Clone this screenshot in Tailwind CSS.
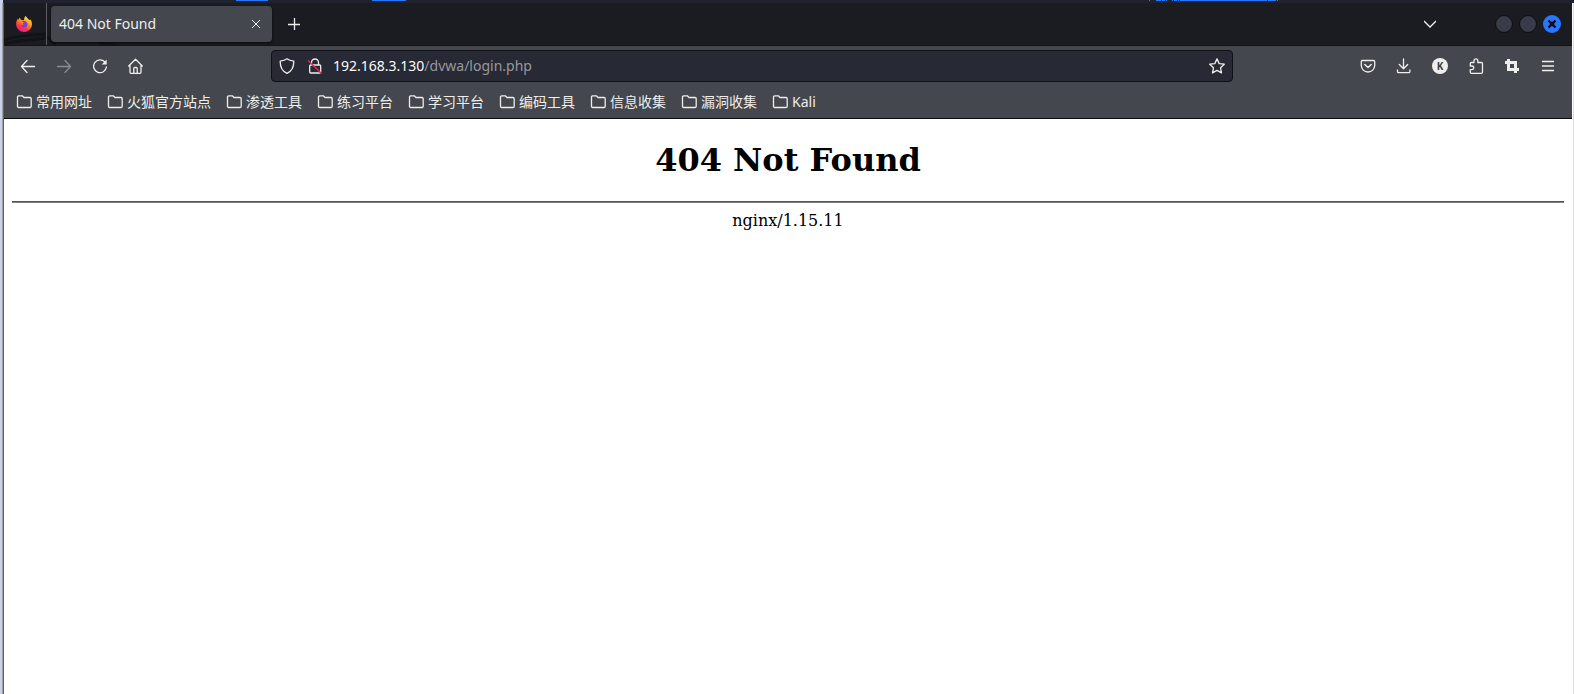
<!DOCTYPE html>
<html lang="zh-CN">
<head>
  <meta charset="UTF-8" />
  <meta name="viewport" content="width=device-width, initial-scale=1.0" />
  <title>404 Not Found</title>
  <script src="https://cdn.jsdelivr.net/npm/@tailwindcss/browser@4"></script>
</head>
<body class="min-h-screen flex flex-col bg-white font-['Noto_Sans','Noto_Sans_CJK_SC',sans-serif] text-sm text-[#eeeeec]">

  <!-- Desktop panel edge -->
  <div class="h-[3px] bg-[#20222e] border-l-[3px] border-[#c9d3ee] flex justify-between items-start">
    <div class="flex pl-[233px] gap-[104px]">
      <span class="w-8 h-px bg-[#2777ff]"></span>
      <span class="w-[34px] h-px bg-[#2777ff]"></span>
    </div>
    <div class="flex gap-px pr-[296px]">
      <span class="w-px h-px bg-[#2777ff]"></span>
      <span class="w-1"></span>
      <span class="w-[5px] h-px bg-[#2777ff]"></span>
      <span class="w-[3px] h-px bg-[#2777ff]"></span>
      <span class="w-px h-px bg-[#2777ff]"></span>
      <span class="w-[3px]"></span>
      <span class="w-px h-px bg-[#2777ff]"></span>
      <span class="w-[3px] h-px bg-[#2777ff]"></span>
      <span class="w-px h-px bg-[#2777ff]"></span>
      <span class="w-[87px] h-px bg-[#2777ff]"></span>
      <span class="w-2 h-px bg-[#2777ff]"></span>
      <span class="w-px h-px bg-[#2777ff]"></span>
    </div>
  </div>

  <div class="grow flex border-l-2 border-r border-l-[#c9d3ee] border-r-[#dddddd]">
    <div class="w-px bg-[#a0a0a0]"></div>
    <div class="w-px bg-[#606060]"></div>

    <!-- Browser window -->
    <div class="grow min-w-0 flex flex-col mr-px">
      <!-- Tab strip -->
      <header class="relative h-[43px] bg-[#1b1c21] border-b border-[#121317] flex items-center overflow-hidden">
        <svg class="absolute left-0 top-6 w-40 h-[18px]" viewBox="0 0 160 18" fill="none" stroke="#121317" stroke-width="3" aria-hidden="true"><path d="M0 13C15 8 28 8 42 7M0 17C16 12 32 14 44 10M44 10l8 9M95 16l35 5" /></svg>
        <button aria-label="Firefox View" class="relative w-[43px] h-full border-r border-[#5a5b60] flex items-center pl-3">
          <svg class="w-4 h-4" viewBox="0 0 16 16">
            <defs>
              <linearGradient id="flame" x1="0.8" y1="0" x2="0.25" y2="1">
                <stop offset="0" stop-color="#fff44f" />
                <stop offset="0.4" stop-color="#ff980e" />
                <stop offset="0.7" stop-color="#ff3647" />
                <stop offset="1" stop-color="#e31587" />
              </linearGradient>
            </defs>
            <path d="M9.6 0C10 1 12 2.2 13.2 4.2L14.4 3.6C15.6 5.4 16 7 16 8.4A7.9 7.6 0 0 1 .1 8.4C0 6 .8 4 2 2.4L2.6 4 3.6 1.6 5.2 4C6.4 3.8 7.4 4 8 4.2 8 2.4 8.6.8 9.6 0Z" fill="url(#flame)" />
            <path d="M6 5.2C8 4 11.6 5.2 11.6 8.2 11.6 10.6 9.8 11.6 8.2 11.6 6.4 11.6 4.8 10.4 4.6 9 5.6 9.6 7 9.4 7.6 8.4 6.8 8 6.6 7.2 7.8 6.6 7.4 6 6.6 5.8 6 5.2Z" fill="#7542e5" />
          </svg>
        </button>
        <div class="relative ml-1 w-[221px] h-9 rounded bg-[#44474d] shadow-sm shadow-black/60 flex items-center justify-between px-2">
          <span>404 Not Found</span>
          <button aria-label="Close tab" class="w-4 h-4 flex items-center justify-center">
            <svg class="w-2 h-2" viewBox="0 0 8 8" fill="none" stroke="currentColor"><path d="M0 0l8 8M8 0L0 8" /></svg>
          </button>
        </div>
        <button aria-label="New tab" class="ml-[14px] w-4 h-4 flex items-center justify-center">
          <svg class="w-3 h-3" viewBox="0 0 12 12" fill="none" stroke="currentColor"><path d="M0 6.5h12M6.500 0v12" stroke-width="1.3" /></svg>
        </button>
        <div class="ml-auto flex items-center pr-[11px] gap-[6px]">
          <button aria-label="List all tabs" class="mr-[51px] w-4 h-4 flex items-center justify-center">
            <svg class="w-3 h-2" viewBox="0 0 12 8" fill="none" stroke="currentColor" stroke-width="1.3"><path d="M0 1l6 6 6-6" /></svg>
          </button>
          <button aria-label="Minimize" class="w-[18px] h-[18px] rounded-full bg-[#383c4a] border border-[#0c0d10]"></button>
          <button aria-label="Maximize" class="w-[18px] h-[18px] rounded-full bg-[#383c4a] border border-[#0c0d10]"></button>
          <button aria-label="Close window" class="w-[18px] h-[18px] rounded-full bg-[#2777ff] flex items-center justify-center">
            <svg class="w-2 h-2" viewBox="0 0 8 8" fill="none" stroke="#0c0d14" stroke-width="2.4"><path d="M.5.5l7 7M7.500.5l-7 7" /></svg>
          </button>
        </div>
      </header>

      <!-- Navigation toolbar -->
      <nav class="h-10 bg-[#44474d] flex items-center px-[6px]">
        <button aria-label="Back" class="w-9 h-8 flex items-center justify-center">
          <svg class="w-4 h-4" viewBox="0 0 16 16" fill="none" stroke="currentColor" stroke-width="1.3" stroke-linecap="round" stroke-linejoin="round"><path d="M7 2.500L1.500 8.500 7 14.500M1.500 8.500h13" /></svg>
        </button>
        <button aria-label="Forward" disabled class="w-9 h-8 flex items-center justify-center text-[#8a8b8e]">
          <svg class="w-4 h-4" viewBox="0 0 16 16" fill="none" stroke="currentColor" stroke-width="1.3" stroke-linecap="round" stroke-linejoin="round"><path d="M9 2.500L14.500 8.500 9 14.500M14.500 8.500h-13" /></svg>
        </button>
        <button aria-label="Reload" class="w-9 h-8 flex items-center justify-center">
          <svg class="w-4 h-4" viewBox="0 0 16 16" fill="none" stroke="currentColor" stroke-width="1.3" stroke-linecap="round"><path d="M12.800 4A6.400 6.400 0 1 0 14.400 9" /><path d="M14.700 1.500v5h-5z" fill="currentColor" stroke="none" /></svg>
        </button>
        <button aria-label="Home" class="w-9 h-8 flex items-center justify-center">
          <svg class="w-4 h-4" viewBox="0 0 16 16" fill="none" stroke="currentColor" stroke-width="1.3" stroke-linecap="round" stroke-linejoin="round"><path d="M.700 8L7.500 1.300l6.800 6.700M2 7V14.300q0 1 1 1h9q1 0 1-1V7M5.800 15v-4.500q0-1 1-1h1.400q1 0 1 1V15" /></svg>
        </button>

        <div class="mx-[117px] grow h-8 rounded bg-[#272935] border border-[#101116] flex items-center px-[7px]">
          <button aria-label="Tracking protection" class="w-4 h-4">
            <svg class="w-4 h-4" viewBox="0 0 16 16" fill="none" stroke="currentColor" stroke-width="1.3" stroke-linejoin="round"><path d="M8 .8C9.800 2.200 12.200 2.800 14.800 3.100 14.900 9 13 13.200 8 15.300 3 13.200 1.100 9 1.200 3.100 3.800 2.800 6.200 2.200 8 .8Z" /></svg>
          </button>
          <button aria-label="Connection is not secure" class="ml-3 w-4 h-4">
            <svg class="w-4 h-4" viewBox="0 0 16 16" fill="none" stroke="currentColor" stroke-width="1.3"><path d="M4.500 7V4.500a3.500 3.500 0 0 1 7 0V7" /><rect x="2.700" y="7" width="11" height="8" rx="1" /><path d="M1 2.500L14.500 15.500" stroke="#e22850" stroke-width="1.4" /></svg>
          </button>
          <div class="relative ml-[10px] grow">
            <input id="url" type="text" aria-label="Address" value="192.168.3.130/dvwa/login.php" class="absolute inset-0 w-full outline-none text-transparent" />
            <span class="pointer-events-none text-[#97989c]" aria-hidden="true"><span class="text-[#fbfbfe]">192.168.3.130</span>/dvwa/login.php</span>
          </div>
          <button aria-label="Bookmark this page" class="w-4 h-4">
            <svg class="w-4 h-4" viewBox="0 0 16 16" fill="none" stroke="currentColor" stroke-width="1.3" stroke-linejoin="round"><path d="M8 .9l2.200 4.700 5.100.6-3.800 3.500 1 5.200L8 12.400l-4.500 2.500 1-5.200L.7 6.200l5.100-.6z" /></svg>
          </button>
        </div>

        <button aria-label="Save to Pocket" class="w-9 h-8 flex items-center justify-center">
          <svg class="w-4 h-4" viewBox="0 0 16 16" fill="none" stroke="currentColor" stroke-width="1.3" stroke-linecap="round" stroke-linejoin="round"><path d="M2.500 2.500h11q1.200 0 1.200 1.200V7.500a6.700 6.500 0 0 1-13.400 0V3.700Q1.300 2.500 2.500 2.500Z" /><path d="M4.800 6.500L8 9.500l3.200-3" stroke-width="1.500" /></svg>
        </button>
        <button aria-label="Downloads" class="w-9 h-8 flex items-center justify-center">
          <svg class="w-4 h-4" viewBox="0 0 16 16" fill="none" stroke="currentColor" stroke-width="1.3" stroke-linecap="round" stroke-linejoin="round"><path d="M7.500 1v9.500M3.300 6.500l4.200 4.200 4.200-4.200M1.500 12v1.500q0 1.200 1.200 1.200h10q1.200 0 1.200-1.200V12" /></svg>
        </button>
        <button aria-label="Account" class="w-9 h-8 flex items-center justify-center">
          <span class="w-4 h-4 rounded-full bg-[#eeeeec] text-[#3c3e44] text-[10px] leading-4 font-bold text-center">K</span>
        </button>
        <button aria-label="Extensions" class="w-9 h-8 flex items-center justify-center">
          <svg class="w-4 h-4" viewBox="0 0 16 16" fill="none" stroke="currentColor" stroke-width="1.3" stroke-linejoin="round"><path d="M2.300 8V5.500q0-1 1-1H6V2.700a1.900 1.900 0 0 1 3.800 0V4.500h3.700q1 0 1 1v8.800q0 1-1 1H3.300q-1 0-1-1V11.600H4a1.800 1.800 0 0 0 0-3.600Z" /></svg>
        </button>
        <button aria-label="Screenshot" class="w-9 h-8 flex items-center justify-center">
          <svg class="w-4 h-4" viewBox="0 0 16 16" fill="none" stroke="currentColor" stroke-width="3"><path d="M4.500 1v10.500H15M1 4.500h10.500V15" /></svg>
        </button>
        <button aria-label="Application menu" class="w-9 h-8 flex items-center justify-center">
          <svg class="w-3 h-3" viewBox="0 0 12 12" fill="none" stroke="currentColor" stroke-width="1.3"><path d="M0 1.500h12M0 6h12M0 10.500h12" /></svg>
        </button>
      </nav>

      <!-- Bookmarks -->
      <ul id="bookmarks" class="h-[33px] bg-[#44474d] border-b border-[#0c0c0d] flex items-center pl-3 gap-[15px] whitespace-nowrap"></ul>

      <!-- Page -->
      <main class="grow bg-white text-black font-['DejaVu_Serif',serif] text-center px-2">
        <h1 class="text-[32px] leading-[38px] font-bold pt-[22px] pb-[22px]">404 Not Found</h1>
        <hr class="border-t border-b border-t-[#555555] border-b-[#808080]" />
        <p class="text-base leading-5 pt-2">nginx/1.15.11</p>
      </main>
    </div>
  </div>

  <script>
    const bookmarks = ["常用网址", "火狐官方站点", "渗透工具", "练习平台", "学习平台", "编码工具", "信息收集", "漏洞收集", "Kali"];
    const list = document.getElementById("bookmarks");

    bookmarks.forEach(name => {
      const li = document.createElement("li");
      li.innerHTML = `
        <button class="flex items-center gap-1">
          <svg class="w-4 h-4" viewBox="0 0 16 16" fill="none" stroke="currentColor" stroke-width="1.3" stroke-linejoin="round"><path d="M1.500 3q0-1.200 1.200-1.200h3.600L8 3.500h6q1.200 0 1.200 1.200v7.500q0 1.300-1.200 1.300H2.700Q1.500 13.500 1.500 12.200Z" /></svg>
          <span class="leading-5">${name}</span>
        </button>
      `;
      list.appendChild(li);
    });
  </script>

</body>
</html>
